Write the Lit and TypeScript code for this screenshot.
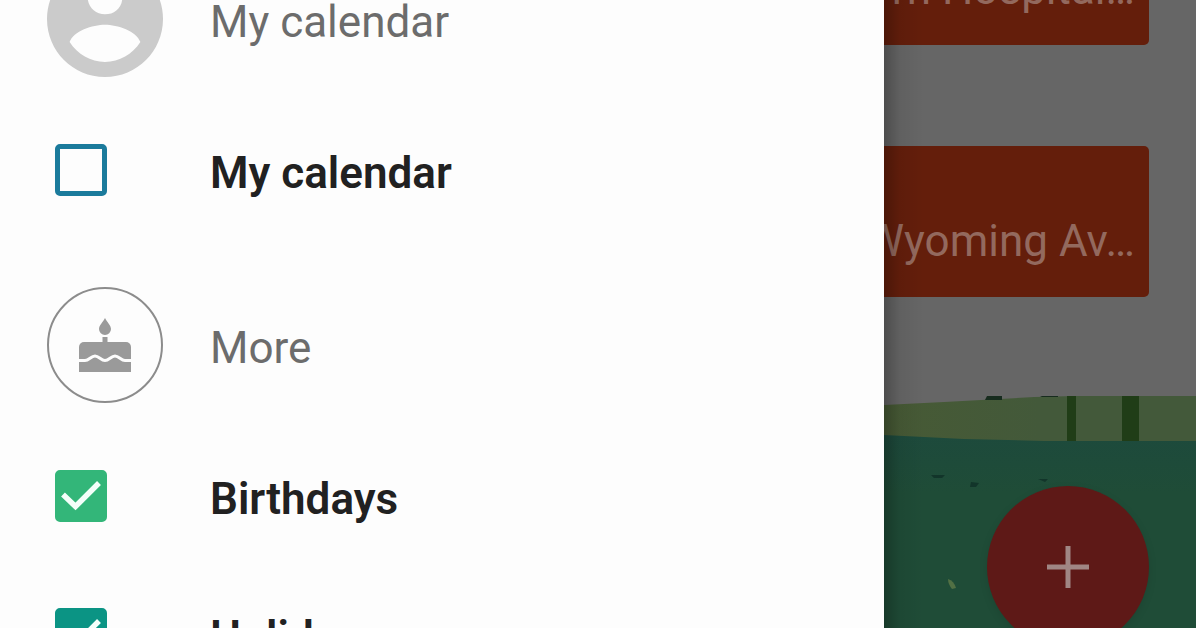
import { LitElement, html, svg, css } from "lit";
import { customElement, property } from "lit/decorators.js";

interface CalendarEntry {
  id: string;
  name: string;
  tone: string;
  checked: boolean;
}

interface Section {
  title: string;
  icon: "account" | "cake";
  entries: CalendarEntry[];
}

const SECTIONS: Section[] = [
  {
    title: "My calendar",
    icon: "account",
    entries: [{ id: "mine", name: "My calendar", tone: "blue", checked: false }],
  },
  {
    title: "More",
    icon: "cake",
    entries: [
      { id: "birthdays", name: "Birthdays", tone: "green", checked: true },
      { id: "holidays", name: "Holidays", tone: "teal", checked: true },
    ],
  },
];

const accountIcon = svg`
  <svg class="avatar" viewBox="2 2 20 20" aria-hidden="true">
    <path fill="#cbcbcb" d="M12 2C6.48 2 2 6.48 2 12s4.48 10 10 10 10-4.48 10-10S17.52 2 12 2zm0 3c1.660 0 3 1.340 3 3.200s-1.340 3-3 3-3-1.340-3-3S10.340 5 12 5zm0 14.400c-2.500 0-4.710-1.280-6.100-3.420.6-1.900 4-3 6.100-3s5.500 1.100 6.100 3c-1.390 2.140-3.600 3.420-6.100 3.420z"/>
  </svg>`;

const cakeIcon = svg`
  <svg class="avatar" viewBox="0 0 116 116" aria-hidden="true">
    <circle cx="58" cy="58" r="57" fill="none" stroke="#8c8c8c" stroke-width="2"/>
    <g fill="#9a9a9a">
      <path d="M58 31c2 4 6 7.500 6 11a6 6 0 0 1-12 0C52 38.500 56 35 58 31z"/>
      <rect x="55.500" y="50" width="5" height="6"/>
      <path d="M37 55h42a5 5 0 0 1 5 5v25H32V60a5 5 0 0 1 5-5z"/>
    </g>
    <path d="M31 73.500h7c4 0 6-4.500 10-4.500s6 4.500 10 4.500 6-4.500 10-4.500 6 4.500 10 4.500h7" fill="none" stroke="#fdfdfd" stroke-width="3"/>
  </svg>`;

@customElement("calendar-drawer")
export class CalendarDrawer extends LitElement {
  @property({ attribute: false }) sections: Section[] = [];

  static styles = css`
    :host {
      display: block;
      overflow: hidden;
      background: #fdfdfd;
      font-family: Roboto, "Liberation Sans", sans-serif;
      font-size: 44px;
      line-height: 52px;
    }
    .sections {
      display: flex;
      flex-direction: column;
      gap: 48px;
      margin-top: -39px;
    }
    .head,
    .entry {
      display: grid;
      grid-template-columns: 116px minmax(0, 1fr);
      column-gap: 47px;
      align-items: center;
      padding-left: 47px;
    }
    .head {
      margin-bottom: 24px;
    }
    .avatar {
      display: block;
      width: 116px;
      height: 116px;
    }
    .title {
      margin: 0;
      padding-top: 6px;
      font-size: 44px;
      font-weight: 400;
      color: #6c6c6c;
    }
    .entry {
      min-height: 138px;
      cursor: pointer;
    }
    .name {
      padding-top: 6px;
      font-weight: 600;
      color: #212121;
    }
    .box {
      display: grid;
      width: 52px;
      height: 52px;
      margin-left: 8px;
    }
    .box > * {
      grid-area: 1 / 1;
    }
    .tick {
      appearance: none;
      width: 52px;
      height: 52px;
      margin: 0;
      border: 5px solid var(--tone);
      border-radius: 5px;
      cursor: pointer;
    }
    .tick:checked {
      background: var(--tone);
    }
    .mark {
      width: 52px;
      height: 52px;
      pointer-events: none;
      visibility: hidden;
    }
    .tick:checked + .mark {
      visibility: visible;
    }
    .blue {
      --tone: #1b7b9c;
    }
    .green {
      --tone: #33b679;
    }
    .teal {
      --tone: #0b9484;
    }
  `;

  render() {
    return html`
      <nav class="sections">
        ${this.sections.map(
          (s) => html`
            <section>
              <header class="head">
                ${s.icon === "account" ? accountIcon : cakeIcon}
                <h2 class="title">${s.title}</h2>
              </header>
              ${s.entries.map(
                (e) => html`
                  <label class="entry ${e.tone}" for=${e.id}>
                    <span class="box">
                      <input class="tick" type="checkbox" id=${e.id} .checked=${e.checked} />
                      <svg class="mark" viewBox="0 0 52 52" aria-hidden="true">
                        <path d="M8 24.500 20.500 36.500 44 13" fill="none" stroke="#f4fffa" stroke-width="5.500" />
                      </svg>
                    </span>
                    <span class="name">${e.name}</span>
                  </label>
                `
              )}
            </section>
          `
        )}
      </nav>
    `;
  }
}

@customElement("schedule-pane")
export class SchedulePane extends LitElement {
  @property({ attribute: false }) events: string[] = [];

  static styles = css`
    :host {
      display: flex;
      flex-direction: column;
      position: relative;
      overflow: hidden;
      background: #666666;
      font-family: Roboto, "Liberation Sans", sans-serif;
    }
    :host::after {
      content: "";
      position: absolute;
      inset: 0 auto 0 0;
      width: 40px;
      background: linear-gradient(to right, rgba(0, 0, 0, 0.25), rgba(0, 0, 0, 0.06) 40%, transparent);
      pointer-events: none;
    }
    .events {
      display: flex;
      flex-direction: column;
      gap: 101px;
      margin: -106px 47px 99px 0;
      padding: 0;
      list-style: none;
    }
    .event {
      display: flex;
      justify-content: flex-end;
      align-items: flex-end;
      box-sizing: border-box;
      height: 151px;
      padding: 0 14px 30px 0;
      overflow: hidden;
      border-radius: 0 5px 5px 0;
      background: #641e0b;
      color: #93695e;
      font-size: 44px;
      line-height: 52px;
      white-space: nowrap;
    }
    .scene {
      position: relative;
      flex: 1;
      min-height: 0;
    }
    .art {
      display: block;
      width: 100%;
      height: 100%;
    }
    .add {
      position: absolute;
      right: 47px;
      bottom: -20px;
      display: grid;
      place-items: center;
      width: 162px;
      height: 162px;
      padding: 0;
      border: 0;
      border-radius: 50%;
      background: #5e1917;
      box-shadow: 0 3px 8px rgba(0, 0, 0, 0.1);
      cursor: pointer;
    }
    .plus {
      width: 42px;
      height: 42px;
    }
  `;

  render() {
    return html`
      <ul class="events">
        ${this.events.map((e) => html`<li class="event">${e}</li>`)}
      </ul>
      <div class="scene">
        <svg class="art" viewBox="0 0 312 232" preserveAspectRatio="xMinYMin slice" aria-hidden="true">
          <defs>
            <linearGradient id="hill">
              <stop offset="0" stop-color="#475a35" />
              <stop offset="0.5" stop-color="#43593a" />
            </linearGradient>
            <linearGradient id="lawn" x2="0" y2="1">
              <stop offset="0" stop-color="#1d4a3c" />
              <stop offset="0.3" stop-color="#1f4c37" />
            </linearGradient>
          </defs>
          <path d="M0 9 60 6 150 1 190 0H312V60H0z" fill="url(#hill)" />
          <path d="M183 0h9v48h-9zM238 0h17v48h-17z" fill="#203d17" />
          <path d="M0 39 80 43 160 45H312V232H0z" fill="url(#lawn)" />
          <path d="M103 0h15v4h-17zM158 0h16v1h-18z" fill="#172c1e" />
          <path d="M47 79h14l-3 3h-8zM87 86l8 1-3 4h-6zM154 83h10l-3 3z" fill="#12352a" />
          <path d="M64 183q6 2 8 9l-4 1q-4-5-4-10z" fill="#527044" />
        </svg>
        <button class="add" type="button" aria-label="Add event">
          <svg class="plus" viewBox="0 0 42 42" aria-hidden="true">
            <path d="M21 0V42M0 21H42" stroke="#a08684" stroke-width="5" />
          </svg>
        </button>
      </div>
    `;
  }
}

@customElement("app-root")
export class AppRoot extends LitElement {
  static styles = css`
    :host {
      display: grid;
      grid-template-columns: minmax(0, 17fr) minmax(0, 6fr);
      grid-template-rows: minmax(0, 1fr);
      height: 100vh;
      overflow: hidden;
    }
  `;

  render() {
    return html`
      <calendar-drawer .sections=${SECTIONS}></calendar-drawer>
      <schedule-pane .events=${["rn Hospital…", "Wyoming Av…"]}></schedule-pane>
    `;
  }
}
